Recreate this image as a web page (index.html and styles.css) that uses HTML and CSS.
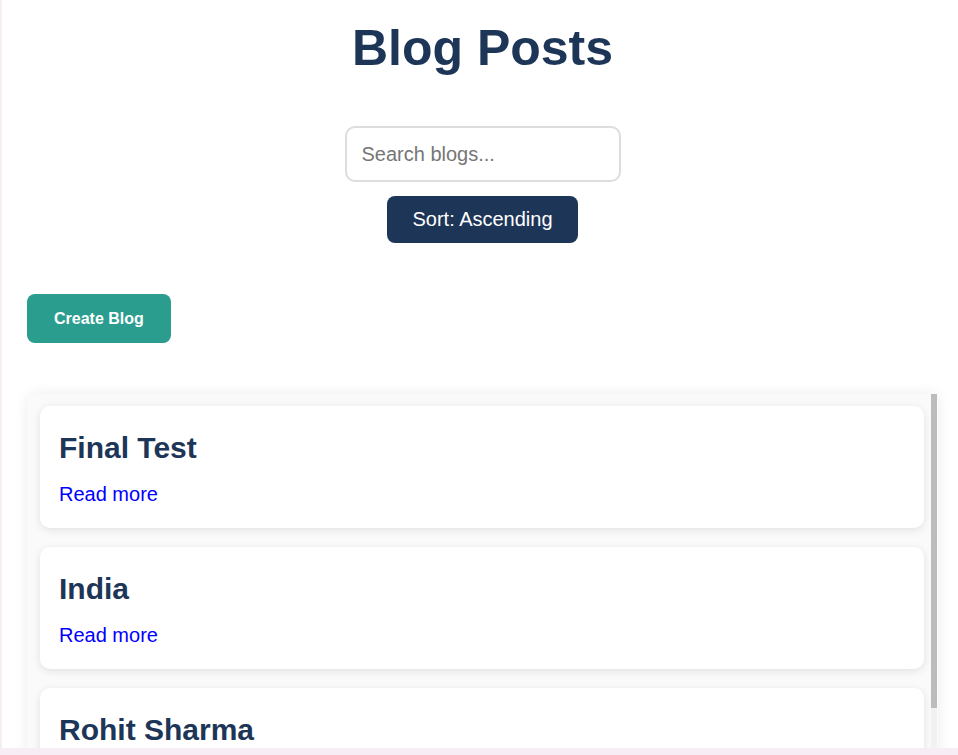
FILE: index.html
```html
<!DOCTYPE html>
<html lang="en">
<head>
<meta charset="utf-8">
<title>Blog Posts</title>
<link rel="stylesheet" href="styles.css">
</head>
<body>
<div class="page">
  <h1 class="title">Blog Posts</h1>
  <div class="controls">
    <input class="search" type="text" placeholder="Search blogs...">
    <button class="sort-btn">Sort: Ascending</button>
  </div>
  <div class="actions">
    <button class="create-btn">Create Blog</button>
  </div>
  <div class="list-wrap">
    <div class="blog-list">
      <div class="card">
        <h2 class="card-title">Final Test</h2>
        <p class="card-link"><a href="#">Read more</a></p>
      </div>
      <div class="card">
        <h2 class="card-title">India</h2>
        <p class="card-link"><a href="#">Read more</a></p>
      </div>
      <div class="card">
        <h2 class="card-title">Rohit Sharma</h2>
        <p class="card-link"><a href="#">Read more</a></p>
      </div>
    </div>
    <div class="scrollbar"><div class="scroll-thumb"></div></div>
  </div>
</div>
</body>
</html>
```
FILE: styles.css
```css
html, body {
  margin: 0;
  padding: 0;
}
body {
  background: #f7eef5;
  font-family: "Liberation Sans", Arial, sans-serif;
  height: 755px;
  overflow: hidden;
}
.page {
  background: #ffffff;
  margin-left: 2px;
  height: 748px;
  overflow: hidden;
  padding: 0 20px 0 25px;
  box-sizing: border-box;
}
.title {
  margin: 20px 0 0;
  font-size: 50px;
  line-height: 57px;
  font-weight: bold;
  color: #1d3557;
  text-align: center;
}
.controls {
  margin-top: 49px;
  display: flex;
  flex-direction: column;
  align-items: center;
  gap: 14px;
}
.search {
  width: 276px;
  height: 56px;
  box-sizing: border-box;
  padding: 0 15px;
  border: 2px solid #dddddd;
  border-radius: 10px;
  font-family: "Liberation Sans", Arial, sans-serif;
  font-size: 20px;
  color: #333;
  outline: none;
}
.search::placeholder {
  color: #767676;
}
.sort-btn {
  height: 47px;
  padding: 0 25px;
  border: none;
  border-radius: 8px;
  background: #1d3557;
  color: #ffffff;
  font-family: "Liberation Sans", Arial, sans-serif;
  font-size: 20px;
}
.actions {
  margin-top: 51px;
  display: flex;
}
.create-btn {
  height: 49px;
  padding: 0 27px;
  border: none;
  border-radius: 8px;
  background: #2a9d8f;
  color: #ffffff;
  font-family: "Liberation Sans", Arial, sans-serif;
  font-size: 16px;
  font-weight: bold;
}
.list-wrap {
  margin-top: 51px;
  height: 370px;
  display: flex;
  background: #fafafa;
  box-shadow: 0 0 14px rgba(0, 0, 0, 0.08);
  border-radius: 10px 0 0 0;
}
.blog-list {
  flex: 1;
  overflow: hidden;
  padding: 12px 7px 12px 13px;
  display: flex;
  flex-direction: column;
  gap: 19px;
}
.scrollbar {
  flex: none;
  width: 6px;
  margin-right: 1px;
  background: #f1f1f1;
}
.scroll-thumb {
  height: 314px;
  background: #bcbcbc;
}
.card {
  flex: none;
  background: #ffffff;
  border-radius: 10px;
  box-shadow: 0 2px 8px rgba(0, 0, 0, 0.1);
  padding: 25px 19px 23px;
  height: 122px;
  box-sizing: border-box;
}
.card-title {
  margin: 0 0 18px;
  font-size: 30px;
  line-height: 34px;
  font-weight: bold;
  color: #1d3557;
}
.card-link {
  margin: 0;
  font-size: 20px;
  line-height: 23px;
}
.card-link a {
  color: #0000ff;
  text-decoration: none;
}
```
